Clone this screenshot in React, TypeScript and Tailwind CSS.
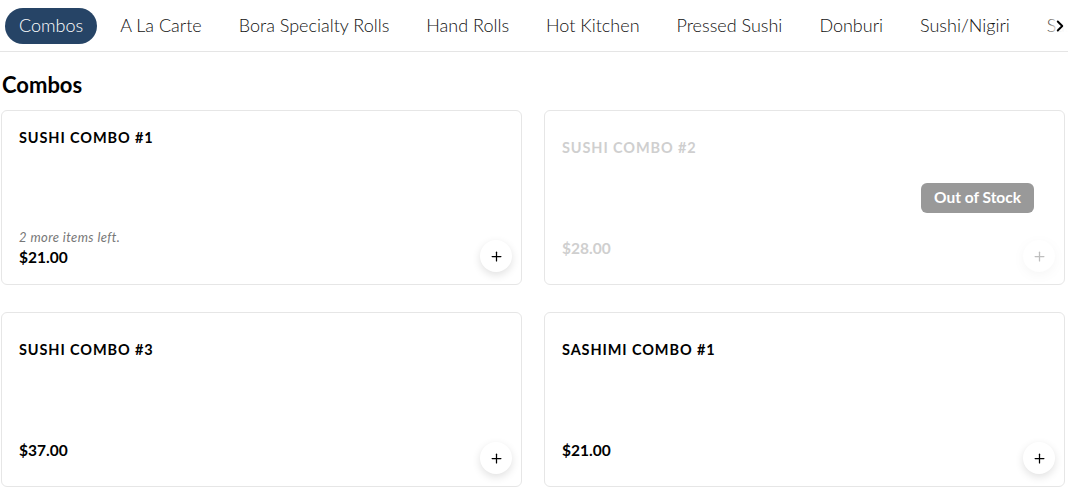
import { ChevronRight, Plus } from 'lucide-react'

const tabs = [
  'Combos',
  'A La Carte',
  'Bora Specialty Rolls',
  'Hand Rolls',
  'Hot Kitchen',
  'Pressed Sushi',
  'Donburi',
  'Sushi/Nigiri',
  'Sashimi',
  'Drinks',
]

type Item = {
  name: string
  price: string
  note?: string
  soldOut?: boolean
}

const items: Item[] = [
  { name: 'Sushi Combo #1', price: '$21.00', note: '2 more items left.' },
  { name: 'Sushi Combo #2', price: '$28.00', soldOut: true },
  { name: 'Sushi Combo #3', price: '$37.00' },
  { name: 'Sashimi Combo #1', price: '$21.00' },
]

function MenuCard({ item }: { item: Item }) {
  return (
    <div className="relative h-[175px] rounded-md border border-[#e6e6e6] bg-white flex flex-col justify-center px-[17px]">
      <div className="flex flex-col">
        <div
          className={`h-5 leading-5 text-[14.5px] font-bold uppercase tracking-[0.9px] ${
            item.soldOut ? 'text-[#cfcfcf]' : 'text-black'
          }`}
        >
          {item.name}
        </div>
        <div className="h-[80px]" />
        {item.note && (
          <div className="h-[19px] leading-[19px] text-[13px] italic tracking-[0.4px] text-[#777]">{item.note}</div>
        )}
        <div
          className={`h-5 leading-5 text-[15.5px] font-bold ${
            item.soldOut ? 'text-[#cfcfcf]' : 'text-black'
          }`}
        >
          {item.price}
        </div>
      </div>

      {item.soldOut && (
        <div className="absolute right-[30px] top-1/2 -translate-y-1/2 rounded-md bg-[#999999] px-[13px] h-[30px] flex items-center text-white text-[15.5px] font-bold">
          Out of Stock
        </div>
      )}

      <button
        className={`absolute right-[9px] bottom-[12px] w-8 h-8 rounded-full bg-white flex items-center justify-center shadow-[0_3px_8px_rgba(0,0,0,0.12)] ${
          item.soldOut ? 'opacity-25' : ''
        }`}
      >
        <Plus className="w-[15px] h-[15px] text-black" strokeWidth={2} />
      </button>
    </div>
  )
}

export default function App() {
  return (
    <div className="w-[1068px] h-[488px] overflow-hidden bg-white font-['Lato','Liberation_Sans',sans-serif] text-black">
      {/* Category tabs */}
      <div className="relative h-[52px] border-b border-[#e5e5e5] overflow-hidden">
        <div className="flex items-center gap-[9px] pl-[5px] h-full whitespace-nowrap">
          {tabs.map((t, i) => (
            <div
              key={t}
              className={`h-9 px-[14px] flex items-center rounded-full text-[18px] font-light shrink-0 ${
                i === 0 ? 'bg-[#264466] text-white' : 'text-[#111]'
              }`}
            >
              {t}
            </div>
          ))}
        </div>
        <div className="absolute right-0 top-0 h-full w-[22px] flex items-center justify-end bg-gradient-to-r from-white/0 via-white/90 to-white">
          <ChevronRight className="w-[18px] h-[18px] text-black -mr-[1px]" strokeWidth={2.5} />
        </div>
      </div>

      {/* Section */}
      <div className="pl-[2px] h-[58px] flex items-center">
        <h2 className="text-[22px] font-bold leading-none pt-[8px]">Combos</h2>
      </div>

      <div className="ml-[1px] w-[1064px] grid grid-cols-2 gap-x-[22px] gap-y-[27px]">
        {items.map((it) => (
          <MenuCard key={it.name} item={it} />
        ))}
      </div>
    </div>
  )
}
